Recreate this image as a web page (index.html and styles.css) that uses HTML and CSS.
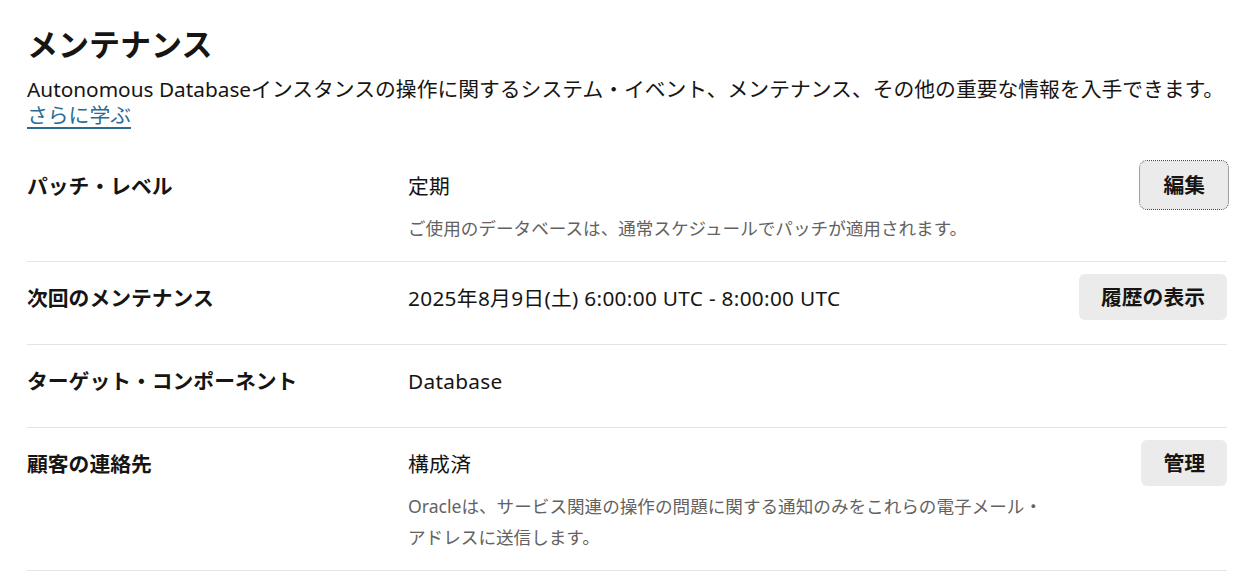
FILE: index.html
```html
<!DOCTYPE html>
<html lang="ja">
<head>
<meta charset="utf-8">
<title>メンテナンス</title>
<link rel="stylesheet" href="styles.css">
</head>
<body>
<main class="page">
  <h1 class="title">メンテナンス</h1>
  <p class="intro">Autonomous Databaseインスタンスの操作に関するシステム・イベント、メンテナンス、その他の重要な情報を入手できます。<br><a class="learn" href="#">さらに学ぶ</a></p>

  <section class="list">
    <div class="row">
      <div class="label">パッチ・レベル</div>
      <div class="value">
        <div class="main">定期</div>
        <div class="desc">ご使用のデータベースは、通常スケジュールでパッチが適用されます。</div>
      </div>
      <div class="action"><button class="btn focused">編集</button></div>
    </div>
    <div class="row">
      <div class="label">次回のメンテナンス</div>
      <div class="value">
        <div class="main">2025年8月9日(土) 6:00:00 UTC - 8:00:00 UTC</div>
      </div>
      <div class="action"><button class="btn">履歴の表示</button></div>
    </div>
    <div class="row">
      <div class="label">ターゲット・コンポーネント</div>
      <div class="value">
        <div class="main">Database</div>
      </div>
      <div class="action"></div>
    </div>
    <div class="row">
      <div class="label">顧客の連絡先</div>
      <div class="value">
        <div class="main">構成済</div>
        <div class="desc">Oracleは、サービス関連の操作の問題に関する通知のみをこれらの電子メール・アドレスに送信します。</div>
      </div>
      <div class="action"><button class="btn">管理</button></div>
    </div>
  </section>
</main>
</body>
</html>
```

FILE: styles.css
```css
* { box-sizing: border-box; }

html, body {
  margin: 0;
  background: #ffffff;
}

body {
  font-family: "Noto Sans", "Noto Sans CJK JP", sans-serif;
  color: #161513;
}

.page {
  padding: 24px 25px 0 27px;
}

.title {
  margin: 0;
  font-size: 31px;
  line-height: 40px;
  font-weight: 700;
}

.intro {
  margin: 12px 0 0;
  font-size: 20.8px;
  line-height: 26px;
}

.learn {
  color: #2c6b91;
  text-decoration: underline;
  text-decoration-thickness: 2px;
  text-underline-offset: 4px;
}

.list {
  margin-top: 21.5px;
}

.row {
  display: grid;
  grid-template-columns: 381px 1fr auto;
  min-height: 83px;
  padding: 12px 0 18px;
  border-bottom: 1px solid #e4e4e4;
}

.label {
  padding-top: 12px;
  font-size: 20.8px;
  line-height: 24px;
  font-weight: 700;
}

.value {
  padding-top: 12px;
}

.main {
  font-size: 20.8px;
  line-height: 24px;
  letter-spacing: 0.3px;
}

.desc {
  margin-top: 15px;
  max-width: 640px;
  font-size: 17.6px;
  line-height: 30.5px;
  letter-spacing: 0;
  color: #646260;
}

.action {
  display: flex;
  justify-content: flex-end;
  align-items: flex-start;
}

.btn {
  height: 46px;
  padding: 0 22px;
  border: none;
  border-radius: 6px;
  background: #ebebeb;
  color: #161513;
  font-family: "Noto Sans", "Noto Sans CJK JP", sans-serif;
  font-size: 20.8px;
  font-weight: 700;
  line-height: 24px;
}

.btn.focused {
  box-shadow: 0 0 0 1px #e6e6e6;
  outline: 1px dotted #444;
  outline-offset: 1px;
}
```
